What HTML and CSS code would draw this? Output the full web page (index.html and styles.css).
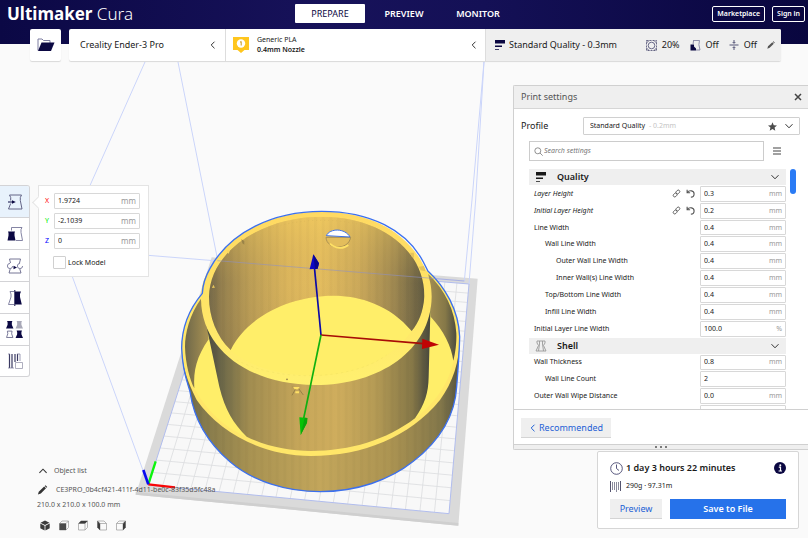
FILE: index.html
```html
<!DOCTYPE html>
<html lang="en">
<head>
<meta charset="utf-8">
<meta name="viewport" content="width=device-width, initial-scale=1">
<title>Ultimaker Cura</title>
<link rel="stylesheet" href="styles.css">
</head>
<body>
<svg class="defs" aria-hidden="true">
  <symbol id="i-left" viewBox="0 0 10 10"><path d="M6.500 1.700 3.200 5l3.300 3.300" fill="none" stroke="currentColor"/></symbol>
  <symbol id="i-down" viewBox="0 0 10 10"><path d="M1.500 3.200 5 6.800l3.500-3.600" fill="none" stroke="currentColor"/></symbol>
  <symbol id="i-up" viewBox="0 0 10 10"><path d="M2 6.500 5 3.500l3 3" fill="none" stroke="currentColor" stroke-width=".9"/></symbol>
  <symbol id="i-pencil" viewBox="0 0 12 12"><path d="M.5 11.500l1-3.500L8 1.800 10.200 4 4 10.300zM8.700 1.200l1-.9 2 2-.9 1z" fill="currentColor"/></symbol>
  <symbol id="i-quality" viewBox="0 0 12 12"><path d="M1 1h10v3.500H1zM1 6.500h7V8H1zM1 10.200h4v.8H1z" fill="currentColor"/></symbol>
  <symbol id="i-link" viewBox="0 0 12 12"><g fill="none" stroke="currentColor" stroke-width="1.200"><rect x="5.800" y="1.200" width="4" height="5.500" rx="2" transform="rotate(45 7.800 4)"/><rect x="2.200" y="5.300" width="4" height="5.500" rx="2" transform="rotate(45 4.200 8)"/></g></symbol>
  <symbol id="i-reset" viewBox="0 0 12 12"><path d="M1.500 1v4H5.500M1.800 4.700C4.500 .8 10.800 2.200 10.800 6.500c0 2.200-1.800 4.200-4.300 4.300" fill="none" stroke="currentColor" stroke-width="1.500"/></symbol>
</svg>

<svg class="scene" viewBox="0 0 808 538" preserveAspectRatio="xMinYMin slice" role="img" aria-label="Build plate with a double-walled ring model">
  <defs>
    <linearGradient id="bore" gradientUnits="userSpaceOnUse" x1="237" y1="0" x2="883" y2="0">
      <stop offset="0" stop-color="#6b6248"/><stop offset=".06" stop-color="#8f7c4e"/><stop offset=".18" stop-color="#b89b56"/><stop offset=".36" stop-color="#dcb65d"/><stop offset=".52" stop-color="#e6bf60"/><stop offset=".7" stop-color="#cba95b"/><stop offset=".86" stop-color="#9a8551"/><stop offset="1" stop-color="#55523f"/>
    </linearGradient>
    <linearGradient id="boreShade" x1="0" y1="0" x2="0" y2="1">
      <stop offset="0" stop-color="#ffd75e" stop-opacity=".4"/><stop offset=".5" stop-color="#c9a452" stop-opacity=".1"/><stop offset="1" stop-color="#8f7a48" stop-opacity=".2"/>
    </linearGradient>
    <linearGradient id="hub" gradientUnits="userSpaceOnUse" x1="233" y1="0" x2="902" y2="0">
      <stop offset="0" stop-color="#4b4c40"/><stop offset=".07" stop-color="#6f6a49"/><stop offset=".18" stop-color="#a08c50"/><stop offset=".42" stop-color="#c7a75a"/><stop offset=".58" stop-color="#cfad5d"/><stop offset=".75" stop-color="#b59b55"/><stop offset=".92" stop-color="#857747"/><stop offset="1" stop-color="#45463c"/>
    </linearGradient>
    <linearGradient id="skirt" gradientUnits="userSpaceOnUse" x1="155" y1="0" x2="990" y2="0">
      <stop offset="0" stop-color="#62604a"/><stop offset=".08" stop-color="#857a4c"/><stop offset=".25" stop-color="#a99352"/><stop offset=".5" stop-color="#c3a65b"/><stop offset=".75" stop-color="#ac9452"/><stop offset=".93" stop-color="#83774a"/><stop offset="1" stop-color="#55543f"/>
    </linearGradient>
    <linearGradient id="innerL" gradientUnits="userSpaceOnUse" x1="160" y1="0" x2="240" y2="0"><stop offset="0" stop-color="#6b6549"/><stop offset="1" stop-color="#ad9553"/></linearGradient>
    <linearGradient id="innerR" gradientUnits="userSpaceOnUse" x1="895" y1="0" x2="980" y2="0"><stop offset="0" stop-color="#a38e52"/><stop offset=".6" stop-color="#857848"/><stop offset="1" stop-color="#4b4b3e"/></linearGradient>
    <linearGradient id="lip" x1="0" y1="0" x2="0" y2="1"><stop offset="0" stop-color="#ffd962"/><stop offset=".5" stop-color="#ffe466"/><stop offset="1" stop-color="#fff070"/></linearGradient>
    <pattern id="facets" width="23" height="10" patternUnits="userSpaceOnUse"><path d="M0 0h9v10H0z" fill="#000" opacity=".018"/></pattern>
    <clipPath id="boreClip"><path d="M237 290C240 150 400 50 575 50S885 150 883 290C880 335 865 370 845 393C780 315 690 287 610 287C480 287 350 350 302 450C260 410 237 350 237 290Z"/></clipPath>
  </defs>
  <g transform="translate(130 200) scale(.33333)">
    <path d="M245 172 1043 236 985 977 17 884Z" fill="#dadada"/>
    <path d="M17 876 985 969V977L17 884Z" fill="#cfcfcf"/>
    <path d="M267 190 1017 252 957 941 55 855Z" fill="#f8f8f8"/>
    <path id="plate-grid" fill="none" stroke="#dcdde0" stroke-width="2.500"/>
    <path d="M267 190 1017 252 957 941 55 855Z" fill="none" stroke="#b1bdee" stroke-width="3"/>
    <g fill="none" stroke="#cbd5fa" stroke-width="3">
      <path d="M144-414 262 175M1062-414 1037 0 1017 252M1062-414 1026 0 1003 243M45-414-204 145 55 855M-204 145 1003 243"/>
    </g>
    <path d="M217 280C175 330 155 390 155 445C158 520 172 545 180 575C192 660 235 730 300 785C370 845 470 875 570 875C680 875 780 840 850 784C925 725 975 650 980 560C985 500 988 460 989 410C986 330 945 260 893 212Z" fill="url(#skirt)"/>
    <path d="M217 280C175 330 155 390 155 445C157 500 170 540 200 600C270 700 400 768 543 768C700 768 840 710 930 600C970 545 990 480 989 410C986 330 945 260 893 212Z" fill="#ffe669"/>
    <path d="M215 293C178 345 165 400 165 440C166 490 180 540 193 565C240 650 300 690 350 710C410 740 480 753 543 753C660 753 770 720 855 655C940 590 980 510 979 400C975 330 945 270 900 225Z" fill="#ffee69"/>
    <path d="M215 293C178 345 165 400 165 440C166 490 180 540 193 565C190 510 200 470 236 418L225 290Z" fill="url(#innerL)"/>
    <path d="M895 222C945 270 975 330 979 400C980 430 976 460 970 482C965 440 940 390 902 350Z" fill="url(#innerR)"/>
    <path d="M213 300 233 395 268 560C285 630 310 670 350 710C410 740 480 753 543 753C660 753 770 720 855 655C885 610 895 580 896 530L902 300Z" fill="url(#hub)"/>
    <path d="M213 300 233 395 268 560C285 630 310 670 350 710C410 740 480 753 543 753C660 753 770 720 855 655C885 610 895 580 896 530L902 300Z" fill="url(#facets)"/>
    <path d="M180 575C192 660 235 730 300 785C370 845 470 875 570 875C680 875 780 840 850 784C925 725 975 650 980 540C970 560 950 580 930 600C840 710 700 768 543 768C400 768 270 700 200 600Z" fill="url(#facets)"/>
    <path d="M213 300C213 260 220 235 240 205C300 95 430 35 575 35C720 35 830 95 880 195C900 230 905 260 905 290C903 450 750 555 555 555C360 555 216 450 213 300Z" fill="url(#lip)"/>
    <path d="M302 450C350 350 480 287 610 287C690 287 780 315 845 393C790 470 690 527 555 527C440 527 350 495 302 450Z" fill="#ffee69"/>
    <g clip-path="url(#boreClip)">
      <path d="M230 40H890V460H230Z" fill="url(#bore)"/>
      <path d="M230 40H890V460H230Z" fill="url(#boreShade)"/>
      <path d="M230 40H890V460H230Z" fill="url(#facets)"/>
    </g>
    <path d="M320 480C440 545 660 545 770 465" fill="none" stroke="#eadb62" stroke-width="1" stroke-dasharray="7 9"/>
    <path d="M395 95C500 50 650 50 745 92" fill="none" stroke="#d3ae55" stroke-width="1.500" stroke-dasharray="3 9"/>
    <path d="M588 112C590 150 655 152 662 112Z" fill="#e3bd5c" stroke="#8f7c4e" stroke-width="2"/>
    <path d="M600 131C615 146 640 148 655 135" fill="none" stroke="#ffe165" stroke-width="5"/>
    <path d="M589 107C600 84 645 84 660 111Z" fill="#fff" stroke="#3d71e8" stroke-width="3"/>
    <path d="M334 118 343 123V134L337 130Z" fill="#9a8348"/>
    <path d="M840 158h12v16l-8-5zM866 200l16-2 4 16-14-3zM246 264l4-10 5 9z" fill="#e5c45b"/>
    <path d="M289 151 300 149 296 162Z" fill="#fbd85f"/>
    <path d="M486 586 497 566 488 561M506 566 520 585" fill="none" stroke="#8e7943" stroke-width="2.500"/>
    <path d="M489 561h20l-5 7h-10zM496 574h11v6h-11z" fill="#ffe165"/>
    <circle cx="471" cy="538" r="2.500" fill="#8e7943"/>
    <path d="M217 280C175 330 155 390 155 445C158 520 172 545 180 575C192 660 235 730 300 785C370 845 470 875 570 875C680 875 780 840 850 784C925 725 975 650 980 560C985 500 988 460 989 410C986 330 945 260 893 212L880 186C830 90 720 34 575 34C430 34 300 95 240 205C226 230 218 250 217 280Z" fill="none" stroke="#3c70ee" stroke-width="4"/>
    <path d="M262 182 1003 243" stroke="#8d91c9" stroke-opacity=".55" stroke-width="3"/>
    <path d="M573 405 553 200" stroke="#0c0aa8" stroke-width="5"/>
    <path d="M550 163 567 190 563 206 539 208Z" fill="#0c06c4"/><path d="M550 163 567 190 563 206 555 207Z" fill="#09058e"/>
    <path d="M573 405 880 431" stroke="#a80c06" stroke-width="5"/>
    <path d="M877 416 927 434 876 447Z" fill="#c00404"/>
    <path d="M573 405 520 660" stroke="#10b010" stroke-width="5"/>
    <path d="M508 652 532 654 531 668 512 705Z" fill="#07c307"/><path d="M524 653 532 654 531 668 512 705Z" fill="#0aa50a"/>
    <path d="M55 853 77 784" stroke="#0bf50b" stroke-width="7"/>
    <path d="M55 853 135 862" stroke="#f80606" stroke-width="7"/>
    <path d="M55 853 40 810" stroke="#0a0af0" stroke-width="8"/>
  </g>
</svg>

<div class="app">
  <header class="topbar">
    <h1 class="logo">Ultimaker <span>Cura</span></h1>
    <nav class="stages">
      <button class="stage active">PREPARE</button>
      <button class="stage">PREVIEW</button>
      <button class="stage">MONITOR</button>
    </nav>
    <div class="account">
      <button class="outline">Marketplace</button>
      <button class="outline">Sign in</button>
    </div>
  </header>

  <div class="stagebar">
    <button class="open card" aria-label="Open file">
      <svg width="18" height="14" viewBox="0 0 18 14"><path d="M1 12.500V1h4l1.500 1.500H13V5" fill="none" stroke="#7d7da0"/><path d="M4.500 4.500H17.500L14 13H1Z" fill="#0b0842"/></svg>
    </button>
    <div class="config card">
      <button class="machine">Creality Ender-3 Pro <svg class="ico"><use href="#i-left"/></svg></button>
      <button class="material">
        <svg width="16" height="16" viewBox="0 0 16 16"><path d="M0 0h16v13h-4.500L8 16l-3.500-3H0z" fill="#ffc61e"/><circle cx="8" cy="6.500" r="4.200" fill="#fff"/><path d="M7 5.300 8.200 4.500V8.500" fill="none" stroke="#c79a1f"/></svg>
        <span class="nozzle"><span>Generic PLA</span><b>0.4mm Nozzle</b></span>
        <svg class="ico"><use href="#i-left"/></svg>
      </button>
      <button class="setup">
        <svg class="ico12 navy"><use href="#i-quality"/></svg>
        <span class="setup-name">Standard Quality - 0.3mm</span>
        <svg width="11" height="11" viewBox="0 0 11 11"><g fill="none" stroke="#34335f" stroke-width=".7"><path d="M.5.500h10v10H.5z" stroke-dasharray="2 1"/><circle cx="5.500" cy="5.500" r="3.300"/><path d="M.5 3 3 .5M8 .5 10.500 3M.5 8 3 10.500M8 10.500 10.500 8"/></g></svg>
        <span class="stat">20%</span>
        <svg width="11" height="11" viewBox="0 0 11 11"><path d="M3 .5h6.500Q8 4 10 10H6" fill="none" stroke="#77779a" stroke-width=".8"/><path d="M.5 4.500h3.500V6.500L6 8.500v2H.5z" fill="#0b0842"/><path d="M3.500 1 3 4.500" stroke="#77779a" stroke-width=".8"/></svg>
        <span class="stat">Off</span>
        <svg width="10" height="10" viewBox="0 0 10 10"><path d="M.5 5h9M5 0v3M5 7v3M3.700 2 5 3.400 6.300 2M3.700 8 5 6.600 6.300 8" fill="none" stroke="#44436a" stroke-width=".9"/></svg>
        <span class="stat">Off</span>
        <svg class="pen"><use href="#i-pencil"/></svg>
      </button>
    </div>
  </div>

  <main class="work">
    <div class="side">
      <div class="tools">
        <div class="toolbar" role="toolbar" aria-label="Tools">
          <button class="tool on" aria-label="Move"><svg viewBox="0 0 16 16"><path d="M2.500 1h12l-1.200 2.500v3L15 15H1.500L3.700 9.500M3.700 6.500V3.500L2.500 1" fill="none" stroke="#55557a" stroke-width=".9"/><path d="M1 8h5" stroke="#0b0842"/><path d="M5 6.200 8.800 8 5 9.800Z" fill="#0b0842"/></svg></button>
          <button class="tool" aria-label="Scale"><svg viewBox="0 0 16 16"><path d="M4.500 4.500V1.500h10.500l-1 2v3l1.500 8H9" fill="none" stroke="#77779a" stroke-width=".9"/><path d="M1 5.500h7L7.500 7v2.500L8.500 14.500H.5L1.500 9.500V7z" fill="#0b0842"/></svg></button>
          <button class="tool" aria-label="Rotate"><svg viewBox="0 0 16 16"><path d="M3.500 5 2.500 1h11l-1 4M3.200 11 2 15h12l-1.200-4" fill="none" stroke="#66668a" stroke-width=".9"/><circle cx="3" cy="8" r="2.600" fill="none" stroke="#77779a" stroke-width=".9" stroke-dasharray="12 4"/><circle cx="13" cy="8" r="2.600" fill="none" stroke="#77779a" stroke-width=".9" stroke-dasharray="12 4"/><path d="M6.500 7.800 10 9.500 6.500 11.200Z" fill="#0b0842"/></svg></button>
          <button class="tool" aria-label="Mirror"><svg viewBox="0 0 16 16"><path d="M7 1.500H3L4 4v3L1.500 14.500H7" fill="none" stroke="#77779a" stroke-width=".9"/><path d="M8 1.500h6L13 4v3l1.800 7.500H8z" fill="#0b0842"/><path d="M7.800 0v16" stroke="#0b0842"/></svg></button>
          <button class="tool wide" aria-label="Per model settings"><svg viewBox="0 0 16 16"><path d="M1 0h5l-.5 1.500v2L7 7H0L1.500 3.500v-2z" fill="#0b0842"/><path d="M10 0h5l-.5 1.500v2L16 7H9l1.500-3.500v-2z" fill="#a9a9b8"/><path d="M1.300 9.500h4.400L5.300 12l1.200 3.500H.5L1.700 12z" fill="none" stroke="#66668a" stroke-width=".8"/><path d="M10 9h5l-.5 1.500v2L16 16H9l1.500-3.500v-2z" fill="#0b0842"/></svg></button>
          <button class="tool" aria-label="Support blocker"><svg viewBox="0 0 16 16"><path d="M2.500 1v14M5 1v14M8 1v8M10.500 1v7" stroke="#3a3962" stroke-width="1.200"/><path d="M1 1h2M10 1h3M1 15h6M13 1v7" stroke="#77779a" stroke-width=".7"/><path d="M8.500 9.500h7v6h-7z" fill="#fff" stroke="#9a9aae" stroke-width=".8"/></svg></button>
        </div>
        <form class="position">
          <label class="axis"><span class="x">X</span><span class="field"><input type="text" value="1.9724"><i>mm</i></span></label>
          <label class="axis"><span class="y">Y</span><span class="field"><input type="text" value="-2.1039"><i>mm</i></span></label>
          <label class="axis"><span class="z">Z</span><span class="field"><input type="text" value="0"><i>mm</i></span></label>
          <label class="lock"><input type="checkbox"> Lock Model</label>
        </form>
      </div>

      <section class="objects">
        <button class="obj"><svg class="ico12"><use href="#i-up"/></svg> Object list</button>
        <button class="obj name"><svg><use href="#i-pencil"/></svg> CE3PRO_0b4cf421-411f-4d11-be0c-83f35d5fc48a</button>
        <p>210.0 x 210.0 x 100.0 mm</p>
        <div class="views">
          <button aria-label="3D view"><svg viewBox="0 0 10 10"><path d="M5 0 9.500 2.200 5 4.500.5 2.200zM.3 3 4.600 5.200V10L.3 7.800zM9.700 3 5.400 5.200V10L9.700 7.800z" fill="#3c3c3c"/></svg></button>
          <button aria-label="Front view"><svg viewBox="0 0 10 10"><path d="M.5 3h6.500v6.500H.5zM.5 3 3 .5h6.500L7 3M9.500.5V7L7 9.500" fill="none" stroke="#9a9a9a" stroke-width=".7"/><path d="M.5 3H7v6.500H.5z" fill="#4a4a4a"/></svg></button>
          <button aria-label="Top view"><svg viewBox="0 0 10 10"><path d="M.5 3h6.500v6.500H.5zM9.500.5V7L7 9.500" fill="none" stroke="#9a9a9a" stroke-width=".7"/><path d="M.3 3 3 .3h6.900L7.200 3z" fill="#3c3c3c"/></svg></button>
          <button aria-label="Left view"><svg viewBox="0 0 10 10"><path d="M3 3h6.500v6.500H3zM3 3 .5.500H7L9.500 3" fill="none" stroke="#9a9a9a" stroke-width=".7"/><path d="M.3.300 3 3v6.800L.3 7z" fill="#3c3c3c"/></svg></button>
          <button aria-label="Right view"><svg viewBox="0 0 10 10"><path d="M.5 3h6.500v6.500H.5zM.5 3 3 .5h6.500L7 3" fill="none" stroke="#9a9a9a" stroke-width=".7"/><path d="M9.700.300 7 3v6.800L9.700 7z" fill="#3c3c3c"/></svg></button>
        </div>
      </section>
    </div>

    <div class="right">
      <section class="settings">
        <header class="settings-head"><h2>Print settings</h2><button aria-label="Close"><svg width="8" height="8" viewBox="0 0 8 8"><path d="M1 1 7 7M7 1 1 7" stroke="#444" stroke-width="1.500"/></svg></button></header>
        <div class="profile">
          <label for="profile">Profile</label>
          <div class="combo">
            <select id="profile"><option>Standard Quality</option></select><span class="muted">- 0.2mm</span>
            <svg class="star" viewBox="0 0 10 10"><path d="M5 .2 6.400 3.500 10 3.800 7.300 6.200 8.100 9.700 5 7.800 1.900 9.700 2.700 6.200 0 3.800 3.600 3.500z" fill="#4d4d4d"/></svg>
            <svg class="ico"><use href="#i-down"/></svg>
          </div>
        </div>
        <div class="find">
          <div class="search"><svg width="9" height="9" viewBox="0 0 9 9"><circle cx="3.800" cy="3.800" r="3" fill="none" stroke="#777" stroke-width=".8"/><path d="M6 6 8.700 8.700" stroke="#777" stroke-width=".8"/></svg><input type="search" placeholder="Search settings" aria-label="Search settings"></div>
          <button class="menu" aria-label="Setting visibility"><svg width="8" height="8" viewBox="0 0 8 8"><path d="M0 1h8M0 4h8M0 7h8" stroke="#444" stroke-width="1.200"/></svg></button>
        </div>
        <div class="scroller">
          <div class="list">
            <button class="cat"><svg class="ico12"><use href="#i-quality"/></svg><b>Quality</b><svg class="ico"><use href="#i-down"/></svg></button>
            <div class="row"><label class="changed" for="s1">Layer Height</label><svg class="mini"><use href="#i-link"/></svg><svg class="mini"><use href="#i-reset"/></svg><span class="field"><input id="s1" value="0.3"><i>mm</i></span></div>
            <div class="row"><label class="changed" for="s2">Initial Layer Height</label><svg class="mini"><use href="#i-link"/></svg><svg class="mini"><use href="#i-reset"/></svg><span class="field"><input id="s2" value="0.2"><i>mm</i></span></div>
            <div class="row"><label for="s3">Line Width</label><span class="field"><input id="s3" value="0.4"><i>mm</i></span></div>
            <div class="row in1"><label for="s4">Wall Line Width</label><span class="field"><input id="s4" value="0.4"><i>mm</i></span></div>
            <div class="row in2"><label for="s5">Outer Wall Line Width</label><span class="field"><input id="s5" value="0.4"><i>mm</i></span></div>
            <div class="row in2"><label for="s6">Inner Wall(s) Line Width</label><span class="field"><input id="s6" value="0.4"><i>mm</i></span></div>
            <div class="row in1"><label for="s7">Top/Bottom Line Width</label><span class="field"><input id="s7" value="0.4"><i>mm</i></span></div>
            <div class="row in1"><label for="s8">Infill Line Width</label><span class="field"><input id="s8" value="0.4"><i>mm</i></span></div>
            <div class="row"><label for="s9">Initial Layer Line Width</label><span class="field"><input id="s9" value="100.0"><i>%</i></span></div>
            <button class="cat"><svg class="ico12" viewBox="0 0 12 12"><path d="M2 1h8v2L8.500 5.500 11 11H1L3.500 5.500 2 3zM4.500 1v3L3.500 11M7.500 1v3L8.500 11" fill="none" stroke="#999" stroke-width=".9"/></svg><b>Shell</b><svg class="ico"><use href="#i-down"/></svg></button>
            <div class="row"><label for="s10">Wall Thickness</label><span class="field"><input id="s10" value="0.8"><i>mm</i></span></div>
            <div class="row in1"><label for="s11">Wall Line Count</label><span class="field"><input id="s11" value="2"></span></div>
            <div class="row"><label for="s12">Outer Wall Wipe Distance</label><span class="field"><input id="s12" value="0.0"><i>mm</i></span></div>
            <div class="row"><label for="s13">Top Surface Skin Layers</label><span class="field"><input id="s13" value="0"></span></div>
          </div>
          <div class="thumb"></div>
        </div>
        <footer class="settings-foot"><button class="soft"><svg class="ico"><use href="#i-left"/></svg>Recommended</button></footer>
        <div class="grip"><span></span><span></span><span></span></div>
      </section>

      <section class="job">
        <div class="time"><svg width="13" height="13" viewBox="0 0 13 13"><circle cx="6.500" cy="6.500" r="5.800" fill="none" stroke="#45456e" stroke-width=".9"/><path d="M6.500 2.500v4L9 8.500" fill="none" stroke="#45456e" stroke-width=".9"/></svg><b>1 day 3 hours 22 minutes</b>
          <button aria-label="Print information"><svg width="12" height="12" viewBox="0 0 12 12"><circle cx="6" cy="6" r="6" fill="#0b0842"/><circle cx="6.300" cy="3.200" r="1" fill="#fff"/><path d="M4.800 5.200h1.700v3.600M4.600 9h3.400" fill="none" stroke="#fff" stroke-width="1.200"/></svg></button></div>
        <div class="weight"><svg width="11" height="11" viewBox="0 0 11 11"><path d="M.5 0v11M10.500 0v10" stroke="#55546f"/><path d="M2.500 1v8M4.500 1v8M6.500 1v10M8.500 1v8" stroke="#8a8a9c"/></svg><span>290g · 97.31m</span></div>
        <div class="actions"><button class="soft">Preview</button><button class="primary">Save to File</button></div>
      </section>
    </div>
  </main>
</div>
<script src="plate.js"></script>
</body>
</html>
```
FILE: styles.css
```css
* { box-sizing: border-box; }
body {
  margin: 0;
  background: #fafafa;
  color: #191919;
  font: 7px/10px "Noto Sans", "Open Sans", sans-serif;
}
button, input, select { font: inherit; color: inherit; border: 0; padding: 0; background: none; border-radius: 0; }
button { display: flex; align-items: center; cursor: pointer; }
h1, h2, p { margin: 0; font-weight: 400; }
svg { flex: none; display: block; }
.defs { position: absolute; width: 0; height: 0; }
.scene { position: absolute; inset: 0; width: 100%; height: 100%; }
.app { position: relative; min-height: 100vh; display: flex; flex-direction: column; }
.ico { width: 10px; height: 10px; color: #333; }
.ico12 { width: 12px; height: 12px; }
.navy { color: #0b0842; }

.topbar {
  display: flex;
  align-items: flex-start;
  height: 44px;
  padding: 4px 3px 0 7px;
  background: linear-gradient(90deg, #0b0845, #17125a 40%, #141056 60%, #09063f);
  color: #fff;
}
.logo { flex: 1; font-size: 17px; line-height: 20px; font-weight: 700; white-space: nowrap; }
.logo span { font-weight: 300; }
.stages { display: flex; gap: 4px; margin-right: 4px; }
.stage { width: 70px; height: 19px; justify-content: center; font-size: 9px; font-weight: 600; border-radius: 1px; }
.stage.active { background: #fff; color: #0b0842; font-weight: 400; }
.account { flex: 1; display: flex; justify-content: flex-end; gap: 7px; padding-top: 2px; }
.outline { height: 16px; padding: 0 4px; border: 1px solid #fff; border-radius: 2px; font-weight: 600; }

.stagebar { display: flex; gap: 8px; padding: 0 27px 0 30px; margin-top: -15px; height: 32px; font-size: 9px; }
.card { background: #fff; border-radius: 2px; box-shadow: 0 1px 1px #0002; overflow: hidden; }
.open { width: 31px; justify-content: center; }
.config { flex: 1; display: flex; }
.machine { flex: 1 1 156px; justify-content: space-between; padding: 0 7px 0 11px; }
.material { flex: 1 1 260px; gap: 8px; padding: 0 6px 0 7px; border-left: 1px solid #ddd; text-align: left; }
.nozzle { flex: 1; font-size: 7px; line-height: 10px; }
.nozzle span, .nozzle b { display: block; }
.nozzle b { font-weight: 600; }
.setup { flex: 1 1 296px; padding: 0 6px 0 8px; background: #efefef; border-left: 1px solid #ddd; }
.setup-name { flex: 1; padding-left: 3px; text-align: left; white-space: nowrap; }
.stat { padding: 0 10px 0 5px; }
.pen { width: 8px; height: 8px; color: #555; }

.work { flex: 1; display: flex; justify-content: space-between; }
.side { display: flex; flex-direction: column; justify-content: space-between; padding: 124px 0 7px; }
.tools { display: flex; gap: 8px; align-items: flex-start; }
.toolbar { border: 1px solid #d3d3d6; border-left: 0; border-radius: 0 3px 3px 0; overflow: hidden; background: #fff; }
.tool { width: 29px; height: 32px; justify-content: center; border-bottom: 1px solid #d3d3d6; }
.tool:last-child { height: 30px; border-bottom: 0; }
.tool.on { background: #e8f2fc; }
.tool svg { width: 16px; height: 16px; }
.tool.wide svg { width: 17px; height: 17px; }
.position { position: relative; width: 111px; padding: 7px 8px 7px 6px; background: #fff; border: 1px solid #e4e4e4; display: grid; gap: 4px; }
.position::before { content: ""; position: absolute; left: -5px; top: 12px; width: 8px; height: 8px; background: #fff; border: 1px solid #e4e4e4; border-width: 0 0 1px 1px; transform: rotate(45deg); }
.axis { display: flex; align-items: center; }
.axis > span:first-child { width: 9px; }
.axis .field { flex: 1; }
.axis i { font-size: 8px; }
.x { color: #f00; }
.y { color: #0e0; }
.z { color: #00f; }
.field { display: flex; align-items: center; height: 16px; padding: 0 3px; border: 1px solid #d8d8d8; border-radius: 1px; background: #fff; }
.field input { flex: 1; width: 0; min-width: 0; outline: 0; }
.field i { font-style: normal; color: #999; }
.lock { display: flex; align-items: center; gap: 2px; padding: 3px 0 0 8px; }
.lock input { appearance: none; width: 13px; height: 13px; margin: 0; border: 1px solid #d0d0d0; border-radius: 1px; background: #fff; }

.objects { padding-left: 37px; color: #555; }
.obj { gap: 5px; height: 19px; }
.obj svg { color: #333; }
.obj.name { gap: 8px; }
.obj.name svg { width: 11px; height: 10px; }
.objects p { line-height: 12px; }
.views { display: flex; gap: 9px; padding: 9px 0 0 3px; }
.views svg { width: 10px; height: 11px; }

.right { width: 295px; padding: 24px 0 9px; display: flex; flex-direction: column; }
.settings { background: #fff; border: 1px solid #d0d0d0; border-right: 0; border-radius: 2px 0 0 2px; }
.settings-head { display: flex; justify-content: space-between; align-items: center; height: 23px; padding: 0 6px 0 7px; background: #efefef; border-bottom: 1px solid #d6d6d6; }
.settings-head h2 { font-size: 9px; color: #555; }
.profile { display: flex; align-items: center; justify-content: space-between; padding: 8px 8px 0 7px; font-size: 9px; }
.combo { display: flex; align-items: center; width: 217px; height: 18px; padding: 0 5px 0 6px; border: 1px solid #d0d0d0; border-radius: 1px; font-size: 7px; }
.combo select { appearance: none; outline: 0; }
.muted { flex: 1; padding-left: 3px; color: #c4c4c4; }
.star { width: 9px; height: 9px; margin-right: 7px; }
.find { display: flex; align-items: center; padding: 6px 27px 0 15px; gap: 9px; }
.search { flex: 1; display: flex; align-items: center; gap: 1px; height: 20px; padding: 0 4px; border: 1px solid #ccc; }
.search input { flex: 1; min-width: 0; outline: 0; }
.search ::placeholder { color: #777; font-style: italic; opacity: 1; }
.scroller { display: flex; align-items: flex-start; gap: 4px; margin-top: 8px; padding-left: 15px; height: 241px; overflow: hidden; border-bottom: 1px solid #d0d0d0; }
.list { width: 257px; height: 252px; display: grid; grid-auto-rows: 1fr; gap: 1px; }
.cat { width: 100%; padding: 0 6px; background: #efefef; }
.cat b { flex: 1; padding-left: 10px; text-align: left; font-size: 9px; font-weight: 600; }
.row { display: flex; align-items: center; padding-left: 5px; min-height: 0; }
.row label { flex: 1; }
.row.in1 { padding-left: 16px; }
.row.in2 { padding-left: 27px; }
.row .field { width: 86px; height: 100%; }
.changed { font-style: italic; }
.mini { width: 9px; height: 9px; margin-right: 5px; color: #555; }
.thumb { width: 6px; height: 25px; border-radius: 3px; background: #2a7bf5; }
.settings-foot { padding: 8px 8px 6px 7px; }
.soft { height: 20px; padding: 0 8px 0 7px; font-size: 9px; color: #1d5fd6; background: #efefef; border-bottom: 1px solid #d4d4d4; }
.soft .ico { color: #1d5fd6; margin-right: 1px; }
.grip { display: flex; justify-content: center; align-items: center; gap: 3px; height: 5px; background: #efefef; border-top: 1px solid #d0d0d0; }
.grip span { width: 2px; height: 2px; border-radius: 1px; background: #555; }

.job { width: 202px; margin: auto 9px 0 auto; padding: 9px 12px; background: #fff; border: 1px solid #d6d6d6; border-radius: 2px; }
.time, .weight { display: flex; align-items: center; gap: 3px; }
.time { height: 14px; }
.time b { flex: 1; font-size: 9px; font-weight: 600; }
.weight { gap: 5px; height: 14px; margin: 4px 0 6px; }
.actions { display: flex; gap: 8px; }
.actions .soft { width: 52px; justify-content: center; padding: 0; }
.primary { flex: 1; height: 20px; justify-content: center; background: #2672ea; color: #fff; font-size: 9px; font-weight: 600; }
```
FILE: plate.js
```js
// Draws the 21 x 21 centimetre grid of the build plate in perspective.
const corners = [[55, 855], [957, 941], [1017, 252], [267, 190]];
const [[x0, y0], [x1, y1], [x2, y2], [x3, y3]] = corners;
const dx1 = x1 - x2, dx2 = x3 - x2, sx = x0 - x1 + x2 - x3;
const dy1 = y1 - y2, dy2 = y3 - y2, sy = y0 - y1 + y2 - y3;
const det = dx1 * dy2 - dx2 * dy1;
const g = (sx * dy2 - dx2 * sy) / det;
const h = (dx1 * sy - sx * dy1) / det;

function project(u, v) {
  const w = g * u + h * v + 1;
  const x = ((x1 - x0 + g * x1) * u + (x3 - x0 + h * x3) * v + x0) / w;
  const y = ((y1 - y0 + g * y1) * u + (y3 - y0 + h * y3) * v + y0) / w;
  return x.toFixed(1) + " " + y.toFixed(1);
}

let d = "";
for (let i = 1; i < 21; i++) {
  const t = i / 21;
  d += "M" + project(t, 0) + "L" + project(t, 1);
  d += "M" + project(0, t) + "L" + project(1, t);
}
document.getElementById("plate-grid").setAttribute("d", d);
```
